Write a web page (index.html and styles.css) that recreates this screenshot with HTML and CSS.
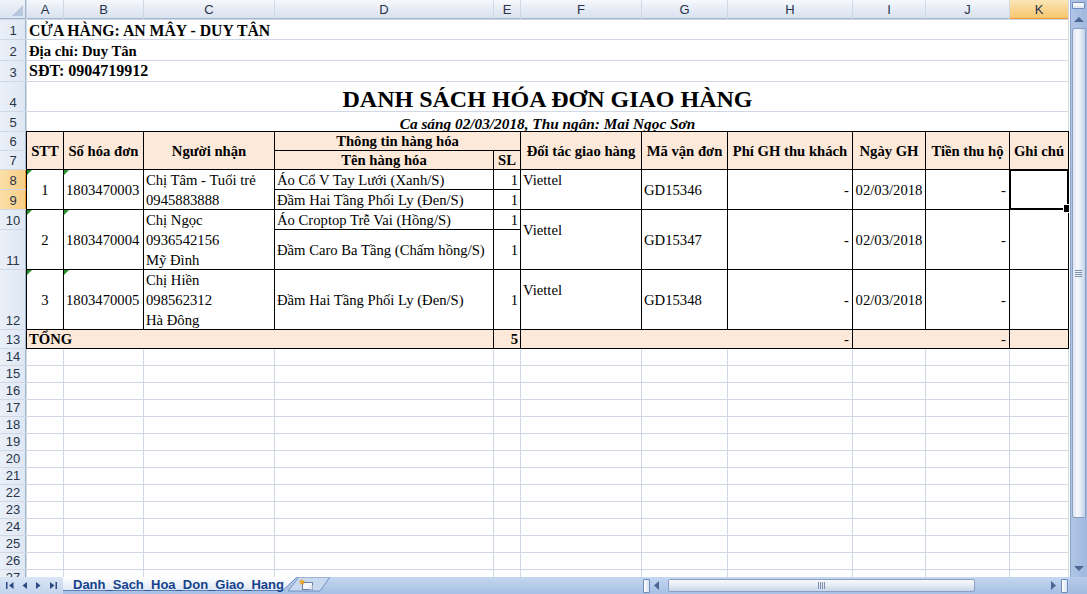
FILE: index.html
```html
<!DOCTYPE html>
<html lang="vi">
<head>
    <meta charset="UTF-8">
    <meta name="viewport" content="width=device-width, initial-scale=1.0">
    <title>Danh sách hóa đơn giao hàng</title>
    <link rel="stylesheet" href="styles.css">
</head>
<body>
<div class="window">
    <div class="main">
        <div class="sheet">
            <!-- column headers -->
            <div class="corner"></div>
            <div class="ch">A</div>
            <div class="ch">B</div>
            <div class="ch">C</div>
            <div class="ch">D</div>
            <div class="ch">E</div>
            <div class="ch">F</div>
            <div class="ch">G</div>
            <div class="ch">H</div>
            <div class="ch">I</div>
            <div class="ch">J</div>
            <div class="ch on">K</div>

            <!-- shop info -->
            <div class="rh">1</div>
            <div class="cell wide shop">CỬA HÀNG: AN MÂY - DUY TÂN</div>
            <div class="rh">2</div>
            <div class="cell wide addr">Địa chỉ: Duy Tân</div>
            <div class="rh">3</div>
            <div class="cell wide phone">SĐT: 0904719912</div>
            <div class="rh">4</div>
            <div class="cell wide title">DANH SÁCH HÓA ĐƠN GIAO HÀNG</div>
            <div class="rh">5</div>
            <div class="cell wide sub">Ca sáng 02/03/2018, Thu ngân: Mai Ngọc Sơn</div>

            <!-- table head -->
            <div class="rh">6</div>
            <div class="cell th tb r2">STT</div>
            <div class="cell th tb r2">Số hóa đơn</div>
            <div class="cell th tb r2">Người nhận</div>
            <div class="cell th tb c2">Thông tin hàng hóa</div>
            <div class="cell th tb r2">Đối tác giao hàng</div>
            <div class="cell th tb r2">Mã vận đơn</div>
            <div class="cell th tb r2">Phí GH thu khách</div>
            <div class="cell th tb r2">Ngày GH</div>
            <div class="cell th tb r2">Tiền thu hộ</div>
            <div class="cell th tb r2">Ghi chú</div>
            <div class="rh">7</div>
            <div class="cell th tb">Tên hàng hóa</div>
            <div class="cell th tb">SL</div>

            <!-- order 1 -->
            <div class="rh on">8</div>
            <div class="cell tb r2 mid ctr txt">1</div>
            <div class="cell tb r2 mid txt">1803470003</div>
            <div class="cell tb r2 mid wrap">Chị Tâm - Tuổi trẻ<br>0945883888</div>
            <div class="cell tb mid">Áo Cổ V Tay Lưới (Xanh/S)</div>
            <div class="cell tb mid num">1</div>
            <div class="cell tb r2 mid wrap">Viettel<br>&nbsp;</div>
            <div class="cell tb r2 mid">GD15346</div>
            <div class="cell tb r2 mid num dash">-</div>
            <div class="cell tb r2 mid ctr">02/03/2018</div>
            <div class="cell tb r2 mid num dash">-</div>
            <div class="cell tb r2 sel"></div>
            <div class="rh on">9</div>
            <div class="cell tb mid">Đầm Hai Tầng Phối Ly (Đen/S)</div>
            <div class="cell tb mid num">1</div>

            <!-- order 2 -->
            <div class="rh">10</div>
            <div class="cell tb r2 mid ctr txt">2</div>
            <div class="cell tb r2 mid txt">1803470004</div>
            <div class="cell tb r2 mid wrap">Chị Ngọc<br>0936542156<br>Mỹ Đình</div>
            <div class="cell tb mid">Áo Croptop Trễ Vai (Hồng/S)</div>
            <div class="cell tb mid num">1</div>
            <div class="cell tb r2 mid wrap">Viettel<br>&nbsp;</div>
            <div class="cell tb r2 mid">GD15347</div>
            <div class="cell tb r2 mid num dash">-</div>
            <div class="cell tb r2 mid ctr">02/03/2018</div>
            <div class="cell tb r2 mid num dash">-</div>
            <div class="cell tb r2"></div>
            <div class="rh">11</div>
            <div class="cell tb mid">Đầm Caro Ba Tầng (Chấm hồng/S)</div>
            <div class="cell tb mid num">1</div>

            <!-- order 3 -->
            <div class="rh">12</div>
            <div class="cell tb mid ctr txt">3</div>
            <div class="cell tb mid txt">1803470005</div>
            <div class="cell tb mid wrap">Chị Hiền<br>098562312<br>Hà Đông</div>
            <div class="cell tb mid">Đầm Hai Tầng Phối Ly (Đen/S)</div>
            <div class="cell tb mid num">1</div>
            <div class="cell tb mid wrap">Viettel<br>&nbsp;</div>
            <div class="cell tb mid">GD15348</div>
            <div class="cell tb mid num dash">-</div>
            <div class="cell tb mid ctr">02/03/2018</div>
            <div class="cell tb mid num dash">-</div>
            <div class="cell tb"></div>

            <!-- total -->
            <div class="rh">13</div>
            <div class="cell tb fill bold mid c4">TỔNG</div>
            <div class="cell tb fill bold mid num">5</div>
            <div class="cell tb fill mid num dash c3">-</div>
            <div class="cell tb fill mid num dash c2">-</div>
            <div class="cell tb fill"></div>

            <!-- empty rows -->
            <div class="rh">14</div>
            <div class="tail"></div>
            <div class="tail"></div>
            <div class="tail"></div>
            <div class="tail"></div>
            <div class="tail"></div>
            <div class="tail"></div>
            <div class="tail"></div>
            <div class="tail"></div>
            <div class="tail"></div>
            <div class="tail"></div>
            <div class="tail"></div>
            <div class="rh">15</div>
            <div class="rh">16</div>
            <div class="rh">17</div>
            <div class="rh">18</div>
            <div class="rh">19</div>
            <div class="rh">20</div>
            <div class="rh">21</div>
            <div class="rh">22</div>
            <div class="rh">23</div>
            <div class="rh">24</div>
            <div class="rh">25</div>
            <div class="rh">26</div>
            <div class="rh">27</div>
        </div>

        <div class="vscroll">
            <div class="vs-split"></div>
            <div class="vs-btn">
                <svg width="10" height="6" viewBox="0 0 10 6"><polygon points="0,5 10,5 5,0" fill="#4d6794"/></svg>
            </div>
            <div class="vs-thumb"><span></span><span></span><span></span><span></span></div>
            <div class="vs-track"></div>
            <div class="vs-btn">
                <svg width="10" height="6" viewBox="0 0 10 6"><polygon points="0,0 10,0 5,5" fill="#4d6794"/></svg>
            </div>
        </div>
    </div>

    <div class="tabbar">
        <div class="nav">
            <svg width="63" height="17" viewBox="0 0 63 17">
                <rect x="6" y="5" width="1.5" height="7" fill="#2b4a82"/>
                <polygon points="13.5,5 13.5,12 9,8.5" fill="#2b4a82"/>
                <polygon points="27,5 27,12 22.5,8.5" fill="#2b4a82"/>
                <polygon points="36,5 36,12 40.5,8.5" fill="#2b4a82"/>
                <polygon points="50,5 50,12 54.5,8.5" fill="#2b4a82"/>
                <rect x="55.5" y="5" width="1.5" height="7" fill="#2b4a82"/>
            </svg>
        </div>
        <div class="tab">
            <svg class="tab-shape" width="236" height="17" viewBox="0 0 236 17">
                <defs>
                    <linearGradient id="tabfill" x1="0" y1="0" x2="0" y2="1">
                        <stop offset="0" stop-color="#ffffff"/>
                        <stop offset="1" stop-color="#dce6f4"/>
                    </linearGradient>
                </defs>
                <polygon points="0,0 234,0 220,14 0,14" fill="url(#tabfill)"/>
                <polyline points="0,13.5 220,13.5 234,0" fill="none" stroke="#5b7db5" stroke-width="1"/>
            </svg>
            <span>Danh_Sach_Hoa_Don_Giao_Hang</span>
        </div>
        <div class="newtab">
            <svg width="48" height="17" viewBox="0 0 48 17">
                <polygon points="3,14 14,0 45,0 35,14" fill="#c9d9ef" stroke="#7190c2" stroke-width="1"/>
                <rect x="17.5" y="5.5" width="10" height="7" fill="#f4f7fb" stroke="#6f82a6"/>
                <path d="M24.5 8.5 h3 v4 h-3 z" fill="#dfe6f1"/>
                <polygon points="17,1.5 18,3.8 20.4,4 18.6,5.4 19.2,7.8 17,6.5 14.8,7.8 15.4,5.4 13.6,4 16,3.8" fill="#f1a227"/>
            </svg>
        </div>
        <div class="strip"></div>
        <div class="hscroll">
            <div class="hs-split"></div>
            <div class="hs-btn">
                <svg width="6" height="9" viewBox="0 0 6 9"><polygon points="5,0 5,9 0,4.5" fill="#4d6794"/></svg>
            </div>
            <div class="hs-track">
                <div class="hs-thumb"><span></span><span></span><span></span><span></span></div>
            </div>
            <div class="hs-btn">
                <svg width="6" height="9" viewBox="0 0 6 9"><polygon points="0,0 0,9 5,4.5" fill="#4d6794"/></svg>
            </div>
            <div class="hs-split"></div>
        </div>
        <div class="corner2"></div>
    </div>
</div>
</body>
</html>
```

FILE: styles.css
```css
* { margin: 0; padding: 0; box-sizing: border-box; }
body {
    background: #fff;
    overflow: hidden;
    font-family: "Liberation Serif", "Times New Roman", serif;
}

.window {
    display: flex;
    flex-direction: column;
    width: 1087px; height: 594px;
}
.main { display: flex; height: 577px; }

/* the grid: 1px gaps are the gridlines */
.sheet {
    flex: none;
    display: grid;
    grid-template-columns: 26px 36px 79px 130px 218px 26px 120px 85px 124px 72px 83px 58px;
    grid-template-rows: 19px 19px 20px 20px 29px 19px 18px 18px 19px 19px 19px 39px 59px 18px repeat(14, 16px);
    gap: 1px;
    width: 1069px; height: 577px;
    padding-right: 1px;
    overflow: hidden;
    background: #d0d7e5;
}

/* headers */
.corner {
    position: relative;
    background: linear-gradient(#eef2f9, #dbe3f0);
    box-shadow: inset -1px -1px 0 #9eb6ce;
}
.corner::after {
    content: "";
    position: absolute;
    right: 3px; bottom: 3px;
    border-left: 11px solid transparent;
    border-bottom: 11px solid #b7c7de;
}
.ch {
    display: flex;
    align-items: center;
    justify-content: center;
    background: linear-gradient(#f6f8fc, #e4eaf4 55%, #d8e1ee);
    box-shadow: inset 0 -1px 0 #9eb6ce;
    font: 13px "Liberation Sans", Arial, sans-serif;
    color: #27344a;
}
.ch.on {
    background: linear-gradient(#fce6b6, #f9d48f 50%, #f6c56b);
    box-shadow: inset 0 -1px 0 #f29536;
}
.rh {
    display: flex;
    align-items: flex-end;
    justify-content: center;
    padding-bottom: 1px;
    background: linear-gradient(to right, #eaf0f8, #dfe7f3);
    box-shadow: inset -1px 0 0 #9eb6ce;
    font: 13px/15px "Liberation Sans", Arial, sans-serif;
    color: #27344a;
}
.rh.on {
    background: linear-gradient(to right, #fbdfa8, #f7cd84);
    box-shadow: inset -1px 0 0 #f29536;
}

/* cells */
.cell {
    position: relative;
    display: flex;
    align-items: flex-end;
    padding: 0 2px 1px;
    background: #fff;
    color: #000;
    font-size: 14.67px;
    line-height: 18px;
    white-space: nowrap;
}
.wide { grid-column: 2 / -1; }
.r2 { grid-row: span 2; }
.c2 { grid-column: span 2; }
.c3 { grid-column: span 3; }
.c4 { grid-column: span 4; }
.mid { align-items: center; padding-bottom: 0; }
.ctr { justify-content: center; }
.num { justify-content: flex-end; }
.dash { padding-right: 3px; }
.wrap { line-height: 20px; }
.bold { font-weight: bold; }
.fill { background: #fde9d9; }
.tb { box-shadow: 0 0 0 1px #000; }

.shop { font-weight: bold; font-size: 15.75px; line-height: 16px; padding-bottom: 0; }
.addr { font-weight: bold; line-height: 18px; padding-bottom: 0; }
.phone { font-weight: bold; font-size: 16px; line-height: 20px; padding-bottom: 0; }
.title {
    justify-content: center;
    padding-bottom: 0;
    font-size: 24px;
    font-weight: bold;
    line-height: 24px;
}
.sub {
    justify-content: center;
    padding-bottom: 0;
    font-size: 15.3px;
    font-weight: bold;
    font-style: italic;
    line-height: 15px;
}
.th {
    align-items: center;
    justify-content: center;
    padding-bottom: 0;
    background: #fde9d9;
    font-weight: bold;
}

/* "number stored as text" marker */
.txt::before {
    content: "";
    position: absolute;
    top: 0; left: 0;
    border-top: 5px solid #23912a;
    border-right: 5px solid transparent;
}

/* active cell */
.sel { box-shadow: 0 0 0 1px #000, inset 0 0 0 1px #000; }
.sel::after {
    content: "";
    position: absolute;
    right: -4px; bottom: -4px;
    z-index: 2;
    width: 7px; height: 7px;
    background: #000;
    border: 1px solid #fff;
}

.tail {
    grid-row: span 14;
    background: repeating-linear-gradient(#fff 0 16px, #d0d7e5 16px 17px);
}

/* vertical scrollbar */
.vscroll {
    display: flex;
    flex-direction: column;
    align-items: center;
    width: 18px; height: 577px;
    background: linear-gradient(to right, #b3c7e7, #a0b8de);
    box-shadow: inset 1px 0 0 #fff, inset 2px 0 0 #8aa4cf;
}
.vs-split {
    margin: 2px 0 3px 1px;
    width: 13px; height: 7px;
    background: linear-gradient(#ffffff, #dbe4f2);
    border: 1px solid #6d8bbf;
    border-radius: 1px;
}
.vs-btn {
    display: flex;
    align-items: center;
    justify-content: center;
    width: 14px; height: 16px;
    margin-left: 1px;
}
.vs-thumb {
    display: flex;
    flex-direction: column;
    align-items: center;
    justify-content: center;
    gap: 1px;
    width: 14px; height: 490px;
    margin-left: 1px;
    background: linear-gradient(to right, #dfe6f2, #f6f8fc 40%, #e6ecf5 60%, #c5d2e6);
    border: 1px solid #8b9fc3;
    border-radius: 2px;
}
.vs-thumb span { width: 7px; height: 1px; background: #7d90b2; }
.vs-track { flex: 1; }

/* sheet tabs and horizontal scrollbar */
.tabbar {
    display: flex;
    height: 17px;
    background: linear-gradient(#c5d7f0, #a6bfe4);
}
.nav {
    width: 63px;
    background: linear-gradient(#d9e5f5, #c3d4ed);
}
.nav svg { display: block; }
.tab {
    position: relative;
    width: 222px;
}
.tab-shape { position: absolute; top: 0; left: 0; }
.tab span {
    position: relative;
    display: block;
    padding-left: 10px;
    font: bold 13px/16px "Liberation Sans", Arial, sans-serif;
    color: #15428b;
}
.newtab { width: 48px; }
.newtab svg { display: block; }
.strip { flex: 1; }
.hscroll {
    display: flex;
    align-items: center;
    width: 426px;
    padding-right: 1px;
}
.hs-split {
    width: 7px; height: 14px;
    background: linear-gradient(to right, #ffffff, #d8e2f1);
    border: 1px solid #6d8bbf;
    border-radius: 1px;
}
.hs-btn {
    display: flex;
    align-items: center;
    justify-content: center;
    width: 14px; height: 17px;
}
.hs-track {
    flex: 1;
    height: 17px;
    padding: 2px 0 2px 4px;
}
.hs-thumb {
    display: flex;
    align-items: center;
    justify-content: center;
    gap: 1px;
    width: 307px; height: 13px;
    background: linear-gradient(#f7f9fc, #e5ebf4 50%, #c9d5e7);
    border: 1px solid #8b9fc3;
    border-radius: 2px;
}
.hs-thumb span { width: 1px; height: 7px; background: #7d90b2; }
.corner2 {
    width: 18px;
    background: linear-gradient(#b9cdea, #a2bade);
}
```
